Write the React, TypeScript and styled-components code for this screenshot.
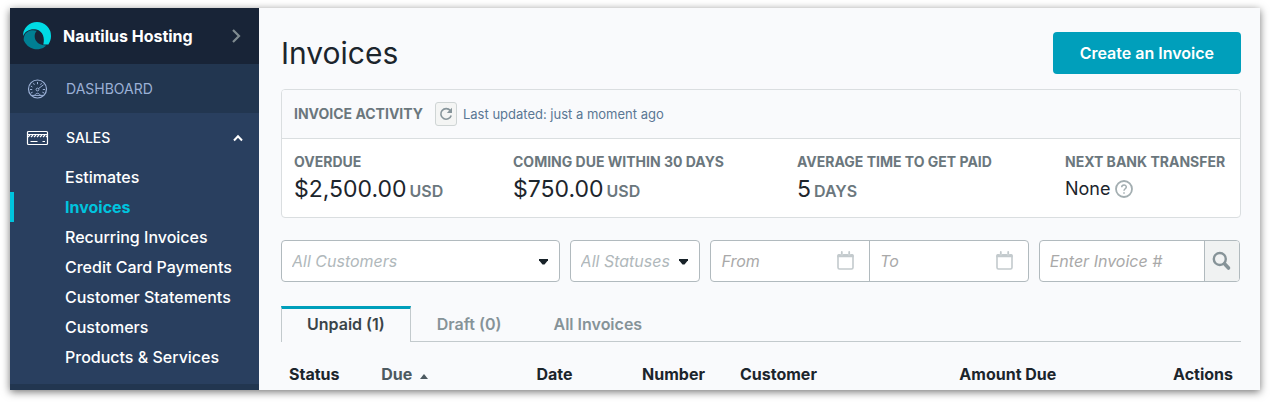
import React from "react";
import styled, { createGlobalStyle } from "styled-components";

const GlobalStyle = createGlobalStyle`
  *, *::before, *::after { box-sizing: border-box; }
  body {
    margin: 0;
    background: #ffffff;
    color: #1c252c;
    font-family: Inter, "Open Sans", "Liberation Sans", sans-serif;
    font-size: 16px;
    line-height: 20px;
  }
  h1, h2, ul, dl, dd { margin: 0; padding: 0; }
  button, input, select { font: inherit; color: inherit; margin: 0; }
  a { color: inherit; text-decoration: none; }
`;

const Page = styled.div`
  padding: 8px 10px 12px;
`;

const Frame = styled.div`
  display: flex;
  background: #f9fafc;
  box-shadow: 0 2px 8px rgba(0, 0, 0, 0.55);
`;

const Sidebar = styled.nav`
  flex: none;
  width: 249px;
  background: #223650;
  color: #ffffff;
`;

const Brand = styled.button`
  display: flex;
  align-items: center;
  gap: 12px;
  width: 100%;
  height: 56px;
  padding: 0 16px 0 13px;
  border: 0;
  background: #182437;
  color: #ffffff;
  font-weight: 700;
  text-align: left;
  cursor: pointer;

  svg { flex: none; }
`;

const BrandName = styled.span`
  flex: 1;
`;

const SectionLink = styled.a<{ $active?: boolean }>`
  display: flex;
  align-items: center;
  gap: 17px;
  height: 49px;
  padding: 0 15px 0 16px;
  font-size: 14px;
  font-weight: ${(p) => (p.$active ? 500 : 400)};
  color: ${(p) => (p.$active ? "#ffffff" : "#9bb0d6")};

  svg { flex: none; }
  span { flex: 1; }
`;

const Section = styled.div`
  padding-bottom: 12px;
  background: #293f5f;
`;

const SubList = styled.ul`
  list-style: none;
`;

const SubLink = styled.a<{ $current?: boolean }>`
  display: block;
  padding: 5px 0 5px 51px;
  border-left: 4px solid ${(p) => (p.$current ? "#00c4de" : "transparent")};
  color: ${(p) => (p.$current ? "#00c4de" : "#ffffff")};
  font-weight: ${(p) => (p.$current ? 700 : 500)};
`;

const Main = styled.main`
  flex: 1;
  min-width: 0;
  padding: 24px 19px 0 22px;
`;

const TitleBar = styled.header`
  display: flex;
  align-items: center;
  justify-content: space-between;
  margin-bottom: 15px;
`;

const Title = styled.h1`
  font-size: 30px;
  line-height: 42px;
  font-weight: 400;
`;

const PrimaryButton = styled.button`
  height: 42px;
  padding: 0 27px;
  border: 0;
  border-radius: 4px;
  background: #009fbb;
  color: #ffffff;
  font-weight: 600;
  cursor: pointer;
`;

const Card = styled.section`
  border: 1px solid #dadee0;
  border-radius: 4px;
  background: #ffffff;
  overflow: hidden;
`;

const CardHeader = styled.div`
  display: flex;
  align-items: center;
  height: 49px;
  padding: 0 12px;
  border-bottom: 1px solid #dadee0;
  background: #f9fafc;
`;

const CardTitle = styled.h2`
  margin-right: 12px;
  color: #6b777d;
  font-size: 14px;
  font-weight: 700;
`;

const RefreshButton = styled.button`
  display: flex;
  align-items: center;
  justify-content: center;
  width: 22px;
  height: 24px;
  margin-right: 6px;
  padding: 0;
  border: 1px solid #cfd5d5;
  border-radius: 3px;
  background: #f4f5f4;
  color: #87959b;
  cursor: pointer;
`;

const Updated = styled.span`
  color: #5a7794;
  font-size: 13px;
`;

const Stats = styled.dl`
  display: grid;
  grid-template-columns: 219fr 284fr 268fr 163fr;
  padding: 12px;
`;

const StatLabel = styled.dt`
  color: #6b777d;
  font-size: 14px;
  line-height: 22px;
  font-weight: 700;
  white-space: nowrap;
`;

const StatValue = styled.dd<{ $small?: boolean }>`
  display: flex;
  align-items: ${(p) => (p.$small ? "center" : "baseline")};
  gap: ${(p) => (p.$small ? 5 : 3)}px;
  font-size: ${(p) => (p.$small ? 18 : 23)}px;
  line-height: 32px;
`;

const Unit = styled.span`
  color: #6b777d;
  font-size: 16px;
  line-height: 20px;
  font-weight: 600;
`;

const HelpButton = styled.button`
  display: flex;
  padding: 0;
  border: 0;
  background: none;
  color: #a3aeb1;
  cursor: pointer;
`;

const Filters = styled.form`
  display: flex;
  gap: 10px;
  margin: 22px 1px 24px 0;
`;

const FieldGroup = styled.div<{ $grow: number }>`
  display: flex;
  flex: ${(p) => p.$grow} 1 0;
  min-width: 0;
  height: 42px;
  border: 1px solid #b1babe;
  border-radius: 4px;
  background: #ffffff;
  overflow: hidden;
`;

const Field = styled.label<{ $date?: boolean }>`
  display: flex;
  flex: 1;
  align-items: center;
  min-width: 0;
  padding-right: ${(p) => (p.$date ? 14 : 11)}px;

  & + & { border-left: 1px solid #b1babe; }

  svg { flex: none; pointer-events: none; }
`;

const Select = styled.select`
  flex: 1;
  min-width: 0;
  height: 40px;
  padding: 0 0 0 10px;
  border: 0;
  outline: 0;
  background: transparent;
  appearance: none;
  color: #b0b8bb;
  font-style: italic;
`;

const TextInput = styled.input`
  flex: 1;
  width: 0;
  min-width: 0;
  height: 40px;
  padding: 0 0 0 10px;
  border: 0;
  outline: 0;
  background: transparent;

  &::placeholder { color: #a9a9a9; font-style: italic; opacity: 1; }
`;

const SearchButton = styled.button`
  display: flex;
  flex: none;
  align-items: center;
  justify-content: center;
  width: 35px;
  padding: 0;
  border: 0;
  border-left: 1px solid #b1babe;
  background: #f0f2f2;
  color: #869398;
  cursor: pointer;
`;

const Tabs = styled.div`
  display: flex;
  height: 36px;
  box-shadow: inset 0 -1px #c3cacd;
`;

const Tab = styled.button<{ $active?: boolean }>`
  padding: 0 25px 3px;
  border: 1px solid transparent;
  border-width: 3px 1px 0;
  background: transparent;
  color: #869398;
  font-weight: 600;
  cursor: pointer;

  ${(p) =>
    p.$active &&
    `
    border-color: #009fbb #c3cacd transparent;
    background: #f9fafc;
    color: #3a4449;
  `}
`;

const Table = styled.table`
  width: 100%;
  table-layout: fixed;
  border-collapse: collapse;
  margin-top: 17px;
`;

const HeadCell = styled.th<{ $width: number; $right?: boolean; $indent?: boolean; $sorted?: boolean }>`
  width: ${(p) => p.$width}%;
  padding: 5px 8px 6px ${(p) => (p.$indent ? 27 : 8)}px;
  text-align: ${(p) => (p.$right ? "right" : "left")};
  font-weight: 700;
  white-space: nowrap;
  color: ${(p) => (p.$sorted ? "#4d5a61" : "#1c252c")};

  svg { margin-left: 8px; vertical-align: 1px; }
`;

const Logo = () => (
  <svg width="28" height="28" viewBox="0 0 28 28" aria-hidden="true">
    <path fill="#00dbe5" d="M0 14A14 14 0 0 1 28 14C28 17.500 27 20 25.400 22.400H20.300C22 16.500 20 9.200 13.500 7.600C8 6.400 2.500 8.500 0 14Z" />
    <path fill="#007f93" d="M1.500 13.500C3 9.500 8 7.200 13.800 8.800C11.200 11.500 11 16 13.200 19C15.300 22 19 23.600 23.400 23.400A14 14 0 0 1 0.800 18.600C0.500 16.600 0.800 15 1.500 13.500Z" />
  </svg>
);

const Chevron = () => (
  <svg width="14" height="14" viewBox="0 0 14 14" fill="none" stroke="#7f8b90" strokeWidth="2.200" aria-hidden="true">
    <path d="M4 1L10 7L4 13" />
  </svg>
);

const ChevronUp = () => (
  <svg width="12" height="12" viewBox="0 0 12 12" fill="none" stroke="#ffffff" strokeWidth="2" aria-hidden="true">
    <path d="M2 8.500L6 4.300L10 8.500" />
  </svg>
);

const Gauge = () => (
  <svg width="23" height="20" viewBox="0 0 23 20" fill="none" stroke="currentColor" aria-hidden="true">
    <circle cx="11.500" cy="10" r="9" strokeWidth="1.200" />
    <circle cx="11.500" cy="10.500" r="1.400" />
    <path d="M12.600 9.500L17.500 5.800M11.500 3V5.200M7.500 4.200L8.400 5.800M4.800 7L6.400 8M4 10.500H6.200M16.800 10.500H19M15.500 4.200L14.600 5.800M5 14L6.600 13.200M16.400 13.200L18 14M5.200 16.400H17.800M9 16.400C9.200 13.600 13.800 13.600 14 16.400" />
  </svg>
);

const CreditCard = () => (
  <svg width="23" height="16" viewBox="0 0 23 16" fill="none" stroke="currentColor" aria-hidden="true">
    <rect x="1.500" y="1.500" width="20" height="13" rx="1" strokeWidth="1.200" />
    <path d="M1.500 4.500H21.500M4.500 11.500H11.500M16.500 11.500H19" />
    <path d="M2 7L4 5M5 7L7 5M8 7L10 5M11 7L13 5M14 7L16 5M17 7L19 5M20 7L21.500 5.500" strokeWidth="1.200" />
  </svg>
);

const Refresh = () => (
  <svg width="14" height="14" viewBox="0 0 14 14" aria-hidden="true">
    <path d="M11.300 3.600A5.300 5.300 0 1 0 12.200 8.500" fill="none" stroke="currentColor" strokeWidth="1.600" />
    <path d="M13 0.800V6H7.800Z" fill="currentColor" />
  </svg>
);

const Help = () => (
  <svg width="18" height="18" viewBox="0 0 18 18" fill="none" stroke="currentColor" aria-hidden="true">
    <circle cx="9" cy="9" r="8" strokeWidth="1.800" />
    <path d="M6.700 7.200C6.700 4.300 11.300 4.300 11.300 7C11.300 8.800 9 8.800 9 10.800M9 12.200V13.800" strokeWidth="1.500" />
  </svg>
);

const Caret = () => (
  <svg width="9" height="7" viewBox="0 0 9 7" aria-hidden="true">
    <path d="M0 1H9V2.200L5.500 6.500H3.500L0 2.200Z" fill="#182229" />
  </svg>
);

const SortUp = () => (
  <svg width="8" height="5" viewBox="0 0 8 5" aria-hidden="true">
    <path d="M0 5L4 0L8 5Z" fill="currentColor" />
  </svg>
);

const Calendar = () => (
  <svg width="19" height="20" viewBox="0 0 19 20" aria-hidden="true">
    <rect x="2" y="4" width="15" height="14" rx="1.500" fill="none" stroke="#c3cacd" strokeWidth="1.600" />
    <path d="M1.200 4.500A1.500 1.500 0 0 1 2.700 3H4.300A1.500 1.500 0 0 0 7.300 3H11.700A1.500 1.500 0 0 0 14.700 3H16.300A1.500 1.500 0 0 1 17.800 4.500V6.200H1.200Z" fill="#c3cacd" />
    <path d="M5.800 1V2.700M13.200 1V2.700" stroke="#c3cacd" strokeWidth="1.800" strokeLinecap="round" />
  </svg>
);

const Magnifier = () => (
  <svg width="20" height="20" viewBox="0 0 20 20" fill="none" stroke="currentColor" aria-hidden="true">
    <circle cx="7.800" cy="8" r="6" strokeWidth="2.400" />
    <path d="M12.500 12.800L16.500 17" strokeWidth="3.600" strokeLinecap="round" />
  </svg>
);

const salesLinks = [
  "Estimates",
  "Invoices",
  "Recurring Invoices",
  "Credit Card Payments",
  "Customer Statements",
  "Customers",
  "Products & Services",
];

export default function App() {
  return (
    <Page>
      <GlobalStyle />
      <Frame>
        <Sidebar>
          <Brand type="button">
            <Logo />
            <BrandName>Nautilus Hosting</BrandName>
            <Chevron />
          </Brand>
          <SectionLink href="#dashboard">
            <Gauge />
            <span>DASHBOARD</span>
          </SectionLink>
          <Section>
            <SectionLink href="#sales" $active>
              <CreditCard />
              <span>SALES</span>
              <ChevronUp />
            </SectionLink>
            <SubList>
              {salesLinks.map((name) => (
                <li key={name}>
                  <SubLink href="#sales" $current={name === "Invoices"}>{name}</SubLink>
                </li>
              ))}
            </SubList>
          </Section>
        </Sidebar>

        <Main>
          <TitleBar>
            <Title>Invoices</Title>
            <PrimaryButton type="button">Create an Invoice</PrimaryButton>
          </TitleBar>

          <Card>
            <CardHeader>
              <CardTitle>INVOICE ACTIVITY</CardTitle>
              <RefreshButton type="button" aria-label="Refresh"><Refresh /></RefreshButton>
              <Updated>Last updated: just a moment ago</Updated>
            </CardHeader>
            <Stats>
              <div>
                <StatLabel>OVERDUE</StatLabel>
                <StatValue>$2,500.00<Unit>USD</Unit></StatValue>
              </div>
              <div>
                <StatLabel>COMING DUE WITHIN 30 DAYS</StatLabel>
                <StatValue>$750.00<Unit>USD</Unit></StatValue>
              </div>
              <div>
                <StatLabel>AVERAGE TIME TO GET PAID</StatLabel>
                <StatValue>5<Unit>DAYS</Unit></StatValue>
              </div>
              <div>
                <StatLabel>NEXT BANK TRANSFER</StatLabel>
                <StatValue $small>
                  None
                  <HelpButton type="button" aria-label="Help"><Help /></HelpButton>
                </StatValue>
              </div>
            </Stats>
          </Card>

          <Filters>
            <FieldGroup $grow={279}>
              <Field>
                <Select aria-label="Customer"><option>All Customers</option></Select>
                <Caret />
              </Field>
            </FieldGroup>
            <FieldGroup $grow={130}>
              <Field>
                <Select aria-label="Status"><option>All Statuses</option></Select>
                <Caret />
              </Field>
            </FieldGroup>
            <FieldGroup $grow={319}>
              <Field $date>
                <TextInput type="text" placeholder="From" aria-label="From date" />
                <Calendar />
              </Field>
              <Field $date>
                <TextInput type="text" placeholder="To" aria-label="To date" />
                <Calendar />
              </Field>
            </FieldGroup>
            <FieldGroup $grow={201}>
              <TextInput type="text" placeholder="Enter Invoice #" aria-label="Invoice number" />
              <SearchButton type="button" aria-label="Search"><Magnifier /></SearchButton>
            </FieldGroup>
          </Filters>

          <Tabs role="tablist">
            <Tab type="button" role="tab" aria-selected="true" $active>Unpaid (1)</Tab>
            <Tab type="button" role="tab" aria-selected="false">Draft (0)</Tab>
            <Tab type="button" role="tab" aria-selected="false">All Invoices</Tab>
          </Tabs>

          <Table>
            <thead>
              <tr>
                <HeadCell $width={9.6}>Status</HeadCell>
                <HeadCell $width={9.6} $sorted aria-sort="ascending">Due<SortUp /></HeadCell>
                <HeadCell $width={12} $right>Date</HeadCell>
                <HeadCell $width={13.8} $right>Number</HeadCell>
                <HeadCell $width={20} $indent>Customer</HeadCell>
                <HeadCell $width={16.6} $right>Amount Due</HeadCell>
                <HeadCell $width={18.4} $right>Actions</HeadCell>
              </tr>
            </thead>
          </Table>
        </Main>
      </Frame>
    </Page>
  );
}
